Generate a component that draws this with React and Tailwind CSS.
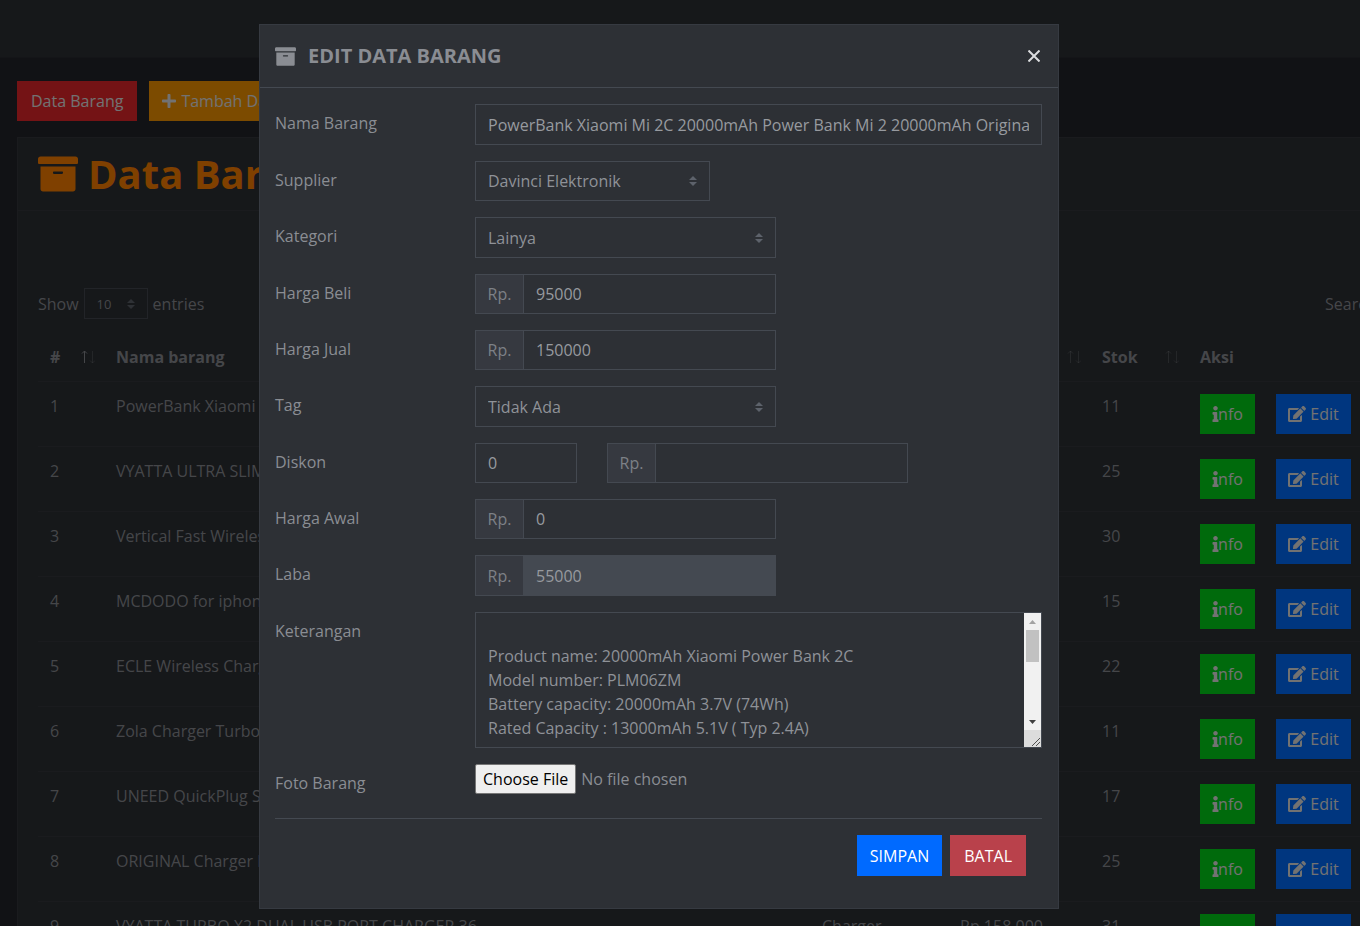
import React from "react";
import { FaArchive, FaPlus, FaInfo, FaEdit } from "react-icons/fa";

const rows = [
  [1, "PowerBank Xiaomi Mi 2C 20000mAh Power Ba", "Lainya", "Rp.150.000", 11],
  [2, "VYATTA ULTRA SLIM POWER BANK 10000mAh", "Powerbank", "Rp.210.000", 25],
  [3, "Vertical Fast Wireless Charger Stand", "Charger", "Rp.175.000", 30],
  [4, "MCDODO for iphone Lightning Cable", "Kabel", "Rp.95.000", 15],
  [5, "ECLE Wireless Charger Fast Charging", "Charger", "Rp.120.000", 22],
  [6, "Zola Charger Turbo Quick Charge 3.0", "Charger", "Rp.99.000", 11],
  [7, "UNEED QuickPlug Smart Charger", "Charger", "Rp.89.000", 17],
  [8, "ORIGINAL Charger Fast Charging", "Charger", "Rp.110.000", 25],
  [9, "VYATTA TURBO X2 DUAL USB PORT CHARGER 36", "Charger", "Rp.158.000", 31],
];

const description = `
Product name: 20000mAh Xiaomi Power Bank 2C
Model number: PLM06ZM
Battery capacity: 20000mAh 3.7V (74Wh)
Rated Capacity : 13000mAh 5.1V ( Typ 2.4A)

`;

function Carets() {
  return (
    <svg viewBox="0 0 8 10" className="pointer-events-none absolute top-1/2 right-[13px] h-[10px] w-2 -translate-y-1/2 fill-[#5d626b]" aria-hidden="true">
      <path d="M4 0 8 4H0zM4 10 0 6h8z" />
    </svg>
  );
}

function SortArrows({ asc }) {
  return (
    <svg viewBox="0 0 14 14" className="h-[14px] w-[14px] shrink-0 fill-none stroke-[#8a8d93]" aria-hidden="true">
      <path d="M3.5 13V1M1 3.5 3.5 1 6 3.5" opacity={asc ? 1 : 0.35} />
      <path d="M11.5 1v12M9 10.5l2.5 2.5 2.5-2.5" opacity="0.3" />
    </svg>
  );
}

function Field({ label, id, children }) {
  return (
    <div className="flex items-start">
      <label htmlFor={id} className="w-[200px] shrink-0 pt-[7px]">{label}</label>
      <div className="flex min-w-0 flex-1">{children}</div>
    </div>
  );
}

function Select({ id, className, options }) {
  return (
    <div className={"relative " + className}>
      <select id={id} className="size-full appearance-none border border-[#444951] bg-transparent px-3 text-[#8f9298] outline-none">
        {options.map((o) => <option key={o}>{o}</option>)}
      </select>
      <Carets />
    </div>
  );
}

function Money({ id, value, readOnly, label, className = "h-10" }) {
  return (
    <div className={"flex w-[301px] border border-[#444951] " + className}>
      <span className="flex w-12 shrink-0 items-center justify-center border-r border-[#444951] bg-[#363940] text-[#7d8086]">Rp.</span>
      <input
        id={id}
        type="text"
        aria-label={label}
        defaultValue={value}
        readOnly={readOnly}
        className="min-w-0 flex-1 px-3 text-[#979a9f] outline-none read-only:bg-[#444951]"
      />
    </div>
  );
}

function ScrollBar() {
  return (
    <div className="flex w-[17px] shrink-0 flex-col bg-[#f1f1f1]" aria-hidden="true">
      <svg viewBox="0 0 17 17" className="size-[17px] fill-[#a3a3a3]"><path d="M8.5 7 12 11H5z" /></svg>
      <div className="mx-[2px] h-8 bg-[#c1c1c1]" />
      <div className="flex-1" />
      <svg viewBox="0 0 17 17" className="size-[17px] fill-[#404040]"><path d="M8.5 11 12 7H5z" /></svg>
      <svg viewBox="0 0 17 17" className="size-[17px] bg-[#dcdcdc] fill-none stroke-[#505050]"><path d="m8 16 8-8M12 16l4-4" /></svg>
    </div>
  );
}

function Modal() {
  return (
    <div className="fixed inset-0 overflow-hidden bg-black/50 pt-6 pr-[42px]">
      <div role="dialog" aria-modal="true" aria-labelledby="modal-title" className="mx-auto max-w-[800px] border border-[#363a41] bg-[#2d3035]">
        <div className="flex items-center justify-between border-b border-[#444951] px-[15px] py-4">
          <h2 id="modal-title" className="flex items-center gap-3 text-[20px] leading-[30px] font-bold">
            <FaArchive className="size-[21px]" />
            EDIT DATA BARANG
          </h2>
          <button type="button" aria-label="Close" className="mr-[2px] p-[1px]">
            <svg viewBox="0 0 12 12" className="size-3 fill-none stroke-[#dcdddf] stroke-2" aria-hidden="true">
              <path d="m0.5 0.5 11 11M11.5 0.5l-11 11" />
            </svg>
          </button>
        </div>
        <form className="pt-4 pr-4 pb-8 pl-[15px]" onSubmit={(e) => e.preventDefault()}>
          <div className="flex flex-col gap-4">
            <Field label="Nama Barang" id="nama">
              <input id="nama" type="text" defaultValue="PowerBank Xiaomi Mi 2C 20000mAh Power Bank Mi 2 20000mAh Original" className="h-[41px] w-full border border-[#444951] px-3 text-[#979a9f] outline-none" />
            </Field>
            <Field label="Supplier" id="supplier">
              <Select id="supplier" className="h-10 w-[235px]" options={["Davinci Elektronik"]} />
            </Field>
            <Field label="Kategori" id="kategori">
              <Select id="kategori" className="h-[41px] w-[301px]" options={["Lainya"]} />
            </Field>
            <Field label="Harga Beli" id="beli"><Money id="beli" value="95000" /></Field>
            <Field label="Harga Jual" id="jual"><Money id="jual" value="150000" /></Field>
            <Field label="Tag" id="tag">
              <Select id="tag" className="h-[41px] w-[301px]" options={["Tidak Ada"]} />
            </Field>
            <Field label="Diskon" id="diskon">
              <div className="flex gap-[30px]">
                <input id="diskon" type="text" defaultValue="0" className="h-10 w-[102px] border border-[#444951] px-3 text-[#979a9f] outline-none" />
                <Money id="diskon-rp" label="Diskon dalam rupiah" value="" />
              </div>
            </Field>
            <Field label="Harga Awal" id="awal"><Money id="awal" value="0" /></Field>
            <Field label="Laba" id="laba"><Money id="laba" value="55000" readOnly className="h-[41px]" /></Field>
            <Field label="Keterangan" id="keterangan">
              <div className="flex h-[136px] w-full border border-[#444951]">
                <textarea id="keterangan" defaultValue={description} className="block min-w-0 flex-1 resize-none px-3 py-[7px] leading-6 text-[#8f9298] outline-none" />
                <ScrollBar />
              </div>
            </Field>
            <Field label="Foto Barang" id="foto">
              <input id="foto" type="file" className="h-[30px] w-full leading-6 file:mr-[5px] file:h-[30px] file:rounded-[2px] file:border file:border-solid file:border-[#767676] file:bg-[#efefef] file:px-[7px] file:text-black" />
            </Field>
          </div>
          <div className="mt-[23px] flex justify-end gap-2 border-t border-[#444951] px-4 pt-4">
            <button type="submit" className="h-[41px] bg-[#006aff] px-[13px] text-white">SIMPAN</button>
            <button type="button" className="h-[41px] bg-[#b9414b] px-[14px] text-white">BATAL</button>
          </div>
        </form>
      </div>
    </div>
  );
}

function HeadCell({ className, children, asc }) {
  return (
    <th className={"px-3 py-3 text-left font-bold " + className}>
      <div className="-mr-[3px] flex items-center justify-between">
        {children}
        <SortArrows asc={asc} />
      </div>
    </th>
  );
}

export default function App() {
  return (
    <div className="h-screen overflow-hidden bg-[#22252a] font-['Open_Sans','Noto_Sans',sans-serif] text-[16px] leading-6 text-[#8a8d93]">
      <header className="h-[58px] border-b border-[#282b30] bg-[#2d3035]" />
      <main className="px-[17px] pt-[23px]">
        <div className="flex gap-3">
          <a href="#data" className="flex h-10 items-center bg-[#e8262b] px-[14px] text-[#e4e4e4]">Data Barang</a>
          <a href="#tambah" className="flex h-10 items-center gap-1 bg-[#f89600] px-3 text-[#e4e4e4]">
            <FaPlus className="size-4" />Tambah Data
          </a>
        </div>
        <section className="mt-4 min-w-[1593px] border border-[#34373d] bg-[#2d3035]">
          <div className="border-b border-[#34373d] px-5 py-3">
            <h1 className="flex items-center gap-[10px] text-[40px] leading-[48px] font-bold text-[#ff8000]">
              <FaArchive className="size-10" />Data Barang
            </h1>
          </div>
          <div className="px-5 pt-[77px]">
            <div className="flex items-center justify-between">
              <label className="flex items-center gap-[5px]">
                Show
                <span className="relative">
                  <select className="block h-[31px] w-16 appearance-none border border-[#444951] px-3 text-[13px]">
                    <option>10</option>
                  </select>
                  <Carets />
                </span>
                entries
              </label>
              <label className="flex w-[264px] items-center gap-2">
                Search:
                <input type="search" className="h-[31px] min-w-0 flex-1 border border-[#444951] px-2" />
              </label>
            </div>
            <table className="mt-[14px] w-full table-fixed border-collapse whitespace-nowrap">
              <thead>
                <tr className="border-b border-[#34373d]">
                  <HeadCell className="w-[66px]" asc>#</HeadCell>
                  <HeadCell className="w-[706px]">Nama barang</HeadCell>
                  <HeadCell className="w-[138px]">Kategori</HeadCell>
                  <HeadCell className="w-[142px]">Harga Jual</HeadCell>
                  <HeadCell className="w-[98px]">Stok</HeadCell>
                  <th className="px-3 py-3 text-left font-bold">Aksi</th>
                </tr>
              </thead>
              <tbody>
                {rows.map(([no, name, category, price, stock]) => (
                  <tr key={no} className="border-b border-[#34373d] align-top">
                    <td className="p-3">{no}</td>
                    <td className="p-3">{name}</td>
                    <td className="p-3">{category}</td>
                    <td className="p-3">{price}</td>
                    <td className="p-3">{stock}</td>
                    <td className="p-3">
                      <div className="flex gap-[21px]">
                        <button type="button" className="flex h-10 w-[55px] items-center justify-center bg-[#00d418] text-[#e4e4e4]">
                          <FaInfo className="-mr-px h-4 w-[7px]" />nfo
                        </button>
                        <button type="button" className="flex h-10 w-[75px] items-center justify-center gap-1 bg-[#006cff] text-[#e4e4e4]">
                          <FaEdit className="h-4 w-[18px]" />Edit
                        </button>
                      </div>
                    </td>
                  </tr>
                ))}
              </tbody>
            </table>
          </div>
        </section>
      </main>
      <Modal />
    </div>
  );
}
